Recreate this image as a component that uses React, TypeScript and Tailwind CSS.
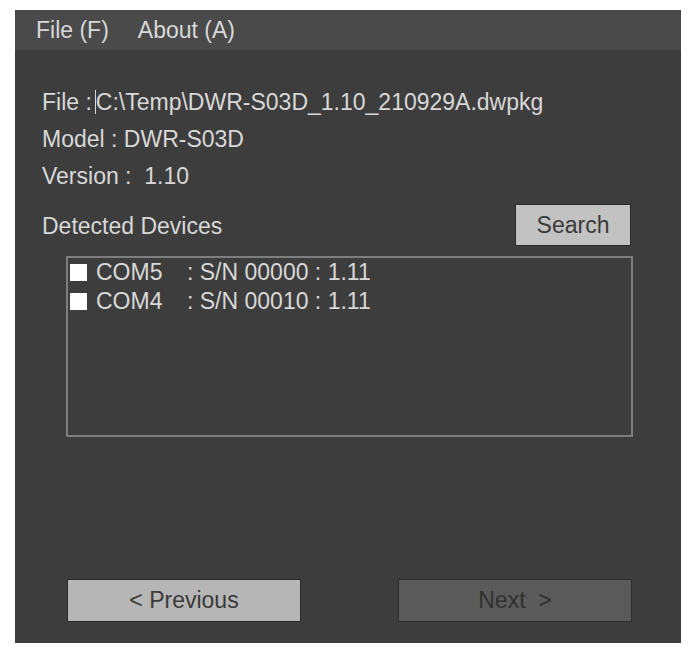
export default function App() {
  const devices = [
    { port: "COM5", sn: "00000", ver: "1.11" },
    { port: "COM4", sn: "00010", ver: "1.11" },
  ];

  return (
    <div
      className="h-[663px] w-[691px] bg-white pl-[15px] pt-[10px]"
      style={{ fontFamily: '"Liberation Sans", Arial, sans-serif' }}
    >
      <div className="flex h-[633px] w-[666px] flex-col bg-[#3d3d3d] text-[23px] text-[#d8d8d8]">
        {/* menu bar */}
        <div className="flex h-[40px] items-center gap-[29px] bg-[#4a4a4a] pl-[21px]">
          <span>File (F)</span>
          <span>About (A)</span>
        </div>

        <div className="flex flex-1 flex-col pl-[27px]">
          <div className="mt-[40px] flex h-[24px] items-center">
            <span>File :</span>
            <span className="ml-[3px] h-[24px] w-px bg-[#d8d8d8]" />
            <span>C:\Temp\DWR-S03D_1.10_210929A.dwpkg</span>
          </div>
          <div className="mt-[13px] flex h-[24px] items-center">Model : DWR-S03D</div>
          <div className="mt-[13px] flex h-[24px] items-center">Version :&nbsp; 1.10</div>

          <div className="mt-[16px] flex h-[42px] items-center justify-between pr-[50px]">
            <span className="mt-[3px]">Detected Devices</span>
            <button className="h-[42px] w-[116px] border border-[#2a2a2a] bg-[#c2c2c2] text-[#3a3a3a]">
              Search
            </button>
          </div>

          <div className="ml-[24px] mt-[10px] h-[181px] w-[567px] border-2 border-[#7e7e7e] pl-[2px]">
            {devices.map((d) => (
              <div key={d.port} className="flex h-[29px] items-center">
                <span className="h-[17px] w-[17px] bg-white" />
                <span className="ml-[9px] w-[91px]">{d.port}</span>
                <span>
                  : S/N {d.sn} : {d.ver}
                </span>
              </div>
            ))}
          </div>

          <div className="mt-auto mb-[21px] flex pl-[25px]">
            <button className="h-[43px] w-[234px] border border-[#2a2a2a] bg-[#b6b6b6] text-[#3a3a3a]">
              &lt; Previous
            </button>
            <button className="ml-[97px] h-[43px] w-[234px] border border-[#2e2e2e] bg-[#5a5a5a] text-[#303030]">
              Next&nbsp; &gt;
            </button>
          </div>
        </div>
      </div>
    </div>
  );
}
